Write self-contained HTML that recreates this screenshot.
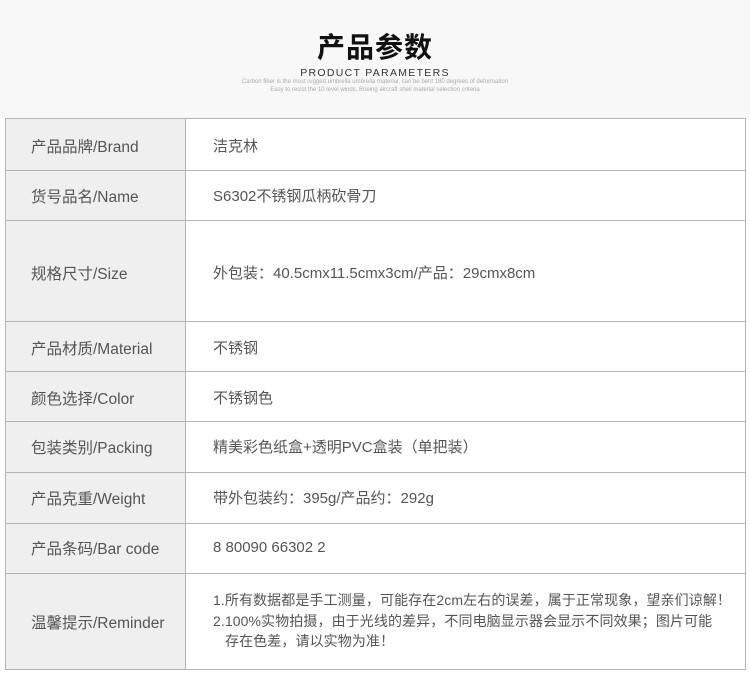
<!DOCTYPE html>
<html><head><meta charset="utf-8"><style>
*{margin:0;padding:0;box-sizing:border-box}
body{width:750px;height:673px;background:#fff;font-family:"Liberation Sans","Noto Sans CJK SC",sans-serif;position:relative;overflow:hidden;color:#555}
.hd{position:absolute;left:0;top:0;width:750px;height:118px;background:#f8f8f8}
.t1{position:absolute;top:26px;width:750px;text-align:center;font-size:28px;font-weight:bold;color:#111;letter-spacing:1px}
.t2{position:absolute;top:67px;width:750px;text-align:center;font-size:10.5px;color:#333;letter-spacing:1.3px}
.t3{position:absolute;top:78px;width:750px;text-align:center;font-size:6px;color:#aaa;line-height:8px}
.tb{position:absolute;left:5px;top:118px;width:741px;height:552px;border:1px solid #b4b4b4}
.lab{position:absolute;left:0;top:0;width:180px;height:100%;background:#efefef;border-right:1px solid #b4b4b4}
.r{position:absolute;left:0;width:739px;border-top:1px solid #b4b4b4}
.l{position:absolute;left:25px;font-size:15.5px;color:#555}
.v{position:absolute;left:207px;font-size:15px;color:#555}
.m{position:absolute;left:207px;font-size:14px;color:#555;line-height:20.5px;letter-spacing:0.1px}
</style></head><body>
<div class="hd"></div>
<div class="t1">产品参数</div>
<div class="t2">PRODUCT PARAMETERS</div>
<div class="t3">Carbon fiber is the most rugged umbrella umbrella material, can be bent 180 degrees of deformation<br>Easy to resist the 10 level winds. Boeing aircraft shell material selection criteria</div>
<div class="tb">
<div class="lab"></div>
<div class="r" style="top:51px"></div>
<div class="r" style="top:101px"></div>
<div class="r" style="top:202px"></div>
<div class="r" style="top:252px"></div>
<div class="r" style="top:302px"></div>
<div class="r" style="top:353px"></div>
<div class="r" style="top:404px"></div>
<div class="r" style="top:454px"></div>
<div class="l" style="top:16px">产品品牌/Brand</div><div class="v" style="top:16px">洁克林</div>
<div class="l" style="top:66px">货号品名/Name</div><div class="v" style="top:66px">S6302不锈钢瓜柄砍骨刀</div>
<div class="l" style="top:143px">规格尺寸/Size</div><div class="v" style="top:143px">外包装：40.5cmx11.5cmx3cm/产品：29cmx8cm</div>
<div class="l" style="top:218px">产品材质/Material</div><div class="v" style="top:218px">不锈钢</div>
<div class="l" style="top:268px">颜色选择/Color</div><div class="v" style="top:268px">不锈钢色</div>
<div class="l" style="top:317px">包装类别/Packing</div><div class="v" style="top:317px">精美彩色纸盒+透明PVC盒装（单把装）</div>
<div class="l" style="top:368px">产品克重/Weight</div><div class="v" style="top:368px">带外包装约：395g/产品约：292g</div>
<div class="l" style="top:418px">产品条码/Bar code</div><div class="v" style="top:420px">8 80090 66302 2</div>
<div class="l" style="top:492px">温馨提示/Reminder</div>
<div class="m" style="top:471px">1.所有数据都是手工测量，可能存在2cm左右的误差，属于正常现象，望亲们谅解！<br>2.100%实物拍摄，由于光线的差异，不同电脑显示器会显示不同效果；图片可能<br>&nbsp;&nbsp;&nbsp;存在色差，请以实物为准！</div>
</div>
</body></html>
